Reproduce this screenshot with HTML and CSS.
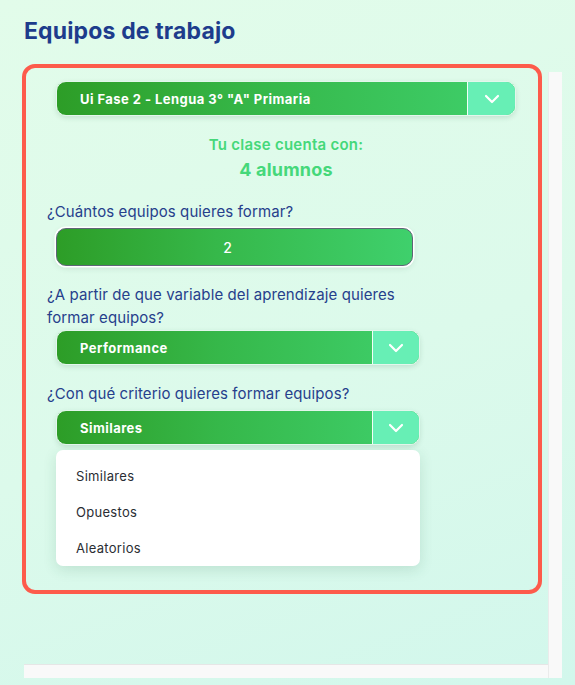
FILE: index.html
```html
<!DOCTYPE html>
<html lang="es">
<head>
<meta charset="utf-8">
<title>Equipos de trabajo</title>
<link rel="stylesheet" href="styles.css">
</head>
<body>
<main class="page">
  <h1 class="title">Equipos de trabajo</h1>
  <div class="frame">
    <section class="card">
      <div class="top">
        <div class="select select-wide">
          <span class="select-text">Ui Fase 2 - Lengua 3° "A" Primaria</span>
          <span class="select-arrow"><svg width="16" height="10" viewBox="0 0 16 10"><path d="M2 2 L8 8 L14 2" fill="none" stroke="#fff" stroke-width="2.2" stroke-linecap="round" stroke-linejoin="round"/></svg></span>
        </div>
        <p class="count-label">Tu clase cuenta con:</p>
        <p class="count-value">4 alumnos</p>
      </div>
      <div class="form">
        <p class="label">¿Cuántos equipos quieres formar?</p>
        <div class="number">2</div>

        <p class="label label-tight">¿A partir de que variable del aprendizaje quieres formar equipos?</p>
        <div class="select select-form">
          <span class="select-text">Performance</span>
          <span class="select-arrow"><svg width="16" height="10" viewBox="0 0 16 10"><path d="M2 2 L8 8 L14 2" fill="none" stroke="#fff" stroke-width="2.2" stroke-linecap="round" stroke-linejoin="round"/></svg></span>
        </div>

        <p class="label">¿Con qué criterio quieres formar equipos?</p>
        <div class="select select-form">
          <span class="select-text">Similares</span>
          <span class="select-arrow"><svg width="16" height="10" viewBox="0 0 16 10"><path d="M2 2 L8 8 L14 2" fill="none" stroke="#fff" stroke-width="2.2" stroke-linecap="round" stroke-linejoin="round"/></svg></span>
        </div>
        <ul class="menu">
          <li>Similares</li>
          <li>Opuestos</li>
          <li>Aleatorios</li>
        </ul>
      </div>
    </section>
    <div class="track-v"></div>
    <div class="track-h"></div>
  </div>
</main>
</body>
</html>
```
FILE: styles.css
```css
* { box-sizing: border-box; }
html, body { margin: 0; padding: 0; }
body {
  width: 575px;
  height: 685px;
  overflow: hidden;
  font-family: Inter, "Noto Sans", "Liberation Sans", sans-serif;
  background: linear-gradient(160deg, #e2fcea 0%, #dcfaeb 55%, #d2f7ec 100%);
}
.page {
  padding: 17px 0 0 24px;
}
.title {
  margin: 0;
  font-size: 23px;
  line-height: 28px;
  font-weight: 700;
  color: #1d3c8c;
  letter-spacing: 0.15px;
}
.frame {
  margin-top: 27px;
  display: grid;
  grid-template-columns: 524px 14px;
  grid-template-rows: 592px 14px;
  width: 538px;
}
.track-v {
  grid-column: 2;
  grid-row: 1 / 3;
  background: #f9f9f9;
  border-left: 1px solid #ebebeb;
}
.track-h {
  grid-column: 1;
  grid-row: 2;
  background: #f9f9f9;
  border-top: 1px solid #e6e6e6;
}
.card {
  grid-column: 1;
  grid-row: 1;
  align-self: start;
  margin: -8px 0 0 -2px;
  width: 520px;
  border: 4px solid #fd5b4b;
  border-radius: 13px;
  padding: 13px 0 24px;
}
.top {
  margin-left: 30px;
  width: 460px;
  text-align: center;
}
.select {
  display: flex;
  height: 35px;
  border-radius: 10px;
  border: 1px solid #e3f7ec;
  overflow: hidden;
  background: linear-gradient(90deg, #2d9d27 0%, #36b84a 45%, #3fd06c 100%);
  box-shadow: 0 2px 5px rgba(40, 90, 60, 0.15);
  text-align: left;
}
.select-text {
  flex: 1;
  display: flex;
  align-items: center;
  padding-left: 23px;
  color: #fff;
  font-size: 13px;
  font-weight: 700;
  letter-spacing: 0.45px;
}
.select-arrow {
  width: 48px;
  display: flex;
  align-items: center;
  justify-content: center;
  background: #67efb5;
  border-left: 1px solid #f2fff8;
}
.select-form {
  margin-left: 9px;
  width: 364px;
  height: 35px;
}
.select-form .select-arrow { width: 47px; }
.count-label {
  margin: 19px 0 0;
  font-size: 15px;
  line-height: 20px;
  font-weight: 600;
  color: #45d87a;
  letter-spacing: 0.25px;
}
.count-value {
  margin: 3px 0 0;
  font-size: 18px;
  line-height: 24px;
  font-weight: 700;
  color: #45d87a;
  letter-spacing: 0.2px;
}
.form {
  margin-left: 21px;
  width: 374px;
}
.label {
  margin: 17px 0 5px;
  font-size: 15px;
  line-height: 23px;
  color: #26408c;
  letter-spacing: 0.1px;
}
.label:first-child { margin-top: 18px; }
.label-tight { margin-bottom: 1px; }
.number {
  margin-left: 9px;
  width: 357px;
  height: 38px;
  padding-right: 14px;
  border-radius: 10px;
  border: 1px solid #5d6676;
  background: linear-gradient(90deg, #2d9d27 0%, #36b84a 45%, #3fd06c 100%);
  box-shadow: 0 0 0 1.5px #ffffff, 0 2px 6px rgba(40, 90, 60, 0.15);
  color: #fff;
  font-size: 14px;
  font-weight: 500;
  display: flex;
  align-items: center;
  justify-content: center;
}
.number + .label { margin-top: 17px; }
.menu {
  list-style: none;
  margin: 5px 0 0 9px;
  padding: 8px 0 0;
  width: 364px;
  background: #fff;
  border-radius: 7px;
  box-shadow: 0 4px 14px rgba(30, 90, 60, 0.14);
}
.menu li {
  height: 36px;
  line-height: 36px;
  padding-left: 20px;
  font-size: 13px;
  color: #2a2d33;
  letter-spacing: 0.3px;
}
```
